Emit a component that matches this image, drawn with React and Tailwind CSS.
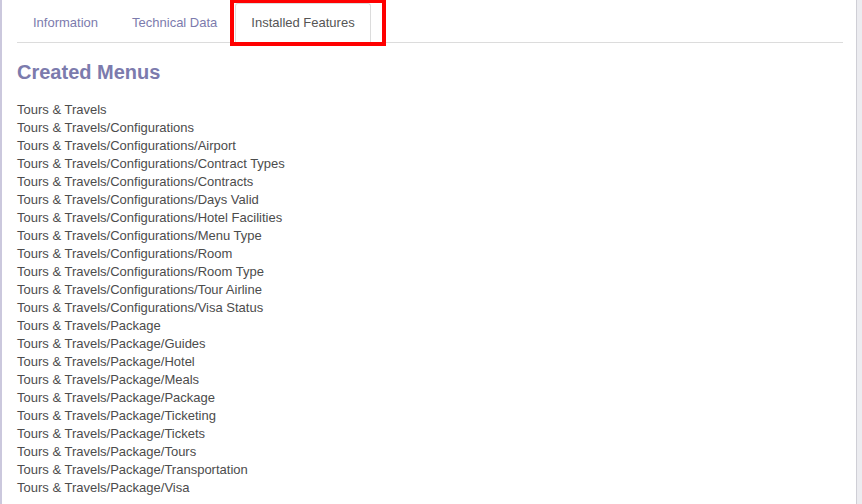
import React from 'react';

const menus = [
  'Tours & Travels',
  'Tours & Travels/Configurations',
  'Tours & Travels/Configurations/Airport',
  'Tours & Travels/Configurations/Contract Types',
  'Tours & Travels/Configurations/Contracts',
  'Tours & Travels/Configurations/Days Valid',
  'Tours & Travels/Configurations/Hotel Facilities',
  'Tours & Travels/Configurations/Menu Type',
  'Tours & Travels/Configurations/Room',
  'Tours & Travels/Configurations/Room Type',
  'Tours & Travels/Configurations/Tour Airline',
  'Tours & Travels/Configurations/Visa Status',
  'Tours & Travels/Package',
  'Tours & Travels/Package/Guides',
  'Tours & Travels/Package/Hotel',
  'Tours & Travels/Package/Meals',
  'Tours & Travels/Package/Package',
  'Tours & Travels/Package/Ticketing',
  'Tours & Travels/Package/Tickets',
  'Tours & Travels/Package/Tours',
  'Tours & Travels/Package/Transportation',
  'Tours & Travels/Package/Visa',
];

const tabs = ['Information', 'Technical Data', 'Installed Features'];

export default function App() {
  return (
    <div
      className="w-[862px] h-[504px] bg-white flex overflow-hidden text-[13px] text-[#4c4c4c]"
      style={{ fontFamily: '"Liberation Sans", Arial, sans-serif' }}
    >
      <div className="w-[2px] bg-[#cbc8dd] shrink-0" />

      <div className="flex-1 pl-[15px] pr-[13px]">
        {/* Tabs */}
        <div className="relative flex items-end h-[43px] border-b border-[#dcdcdc]">
          {tabs.map((t) => {
            const active = t === 'Installed Features';
            return (
              <div
                key={t}
                className={`mr-[2px] -mb-px px-[15px] py-[10px] leading-[18px] border rounded-t-[3px] ${
                  active
                    ? 'bg-white text-[#555] border-[#dcdcdc] border-b-white'
                    : 'text-[#7c7bad] border-transparent'
                }`}
              >
                {t}
              </div>
            );
          })}
          {/* highlight box */}
          <div className="absolute left-[213px] top-[-1px] w-[156px] h-[47px] border-[4px] border-[#ff0000] pointer-events-none" />
        </div>

        {/* Created menus */}
        <h2 className="mt-[17px] text-[20px] leading-[24px] font-bold text-[#7c7bad]">
          Created Menus
        </h2>
        <div className="mt-[17px]">
          {menus.map((m) => (
            <div key={m} className="leading-[18px]">
              {m}
            </div>
          ))}
        </div>
      </div>

      <div className="w-[6px] shrink-0 bg-[#ececf0] border-l border-[#cfcfd6]" />
    </div>
  );
}
